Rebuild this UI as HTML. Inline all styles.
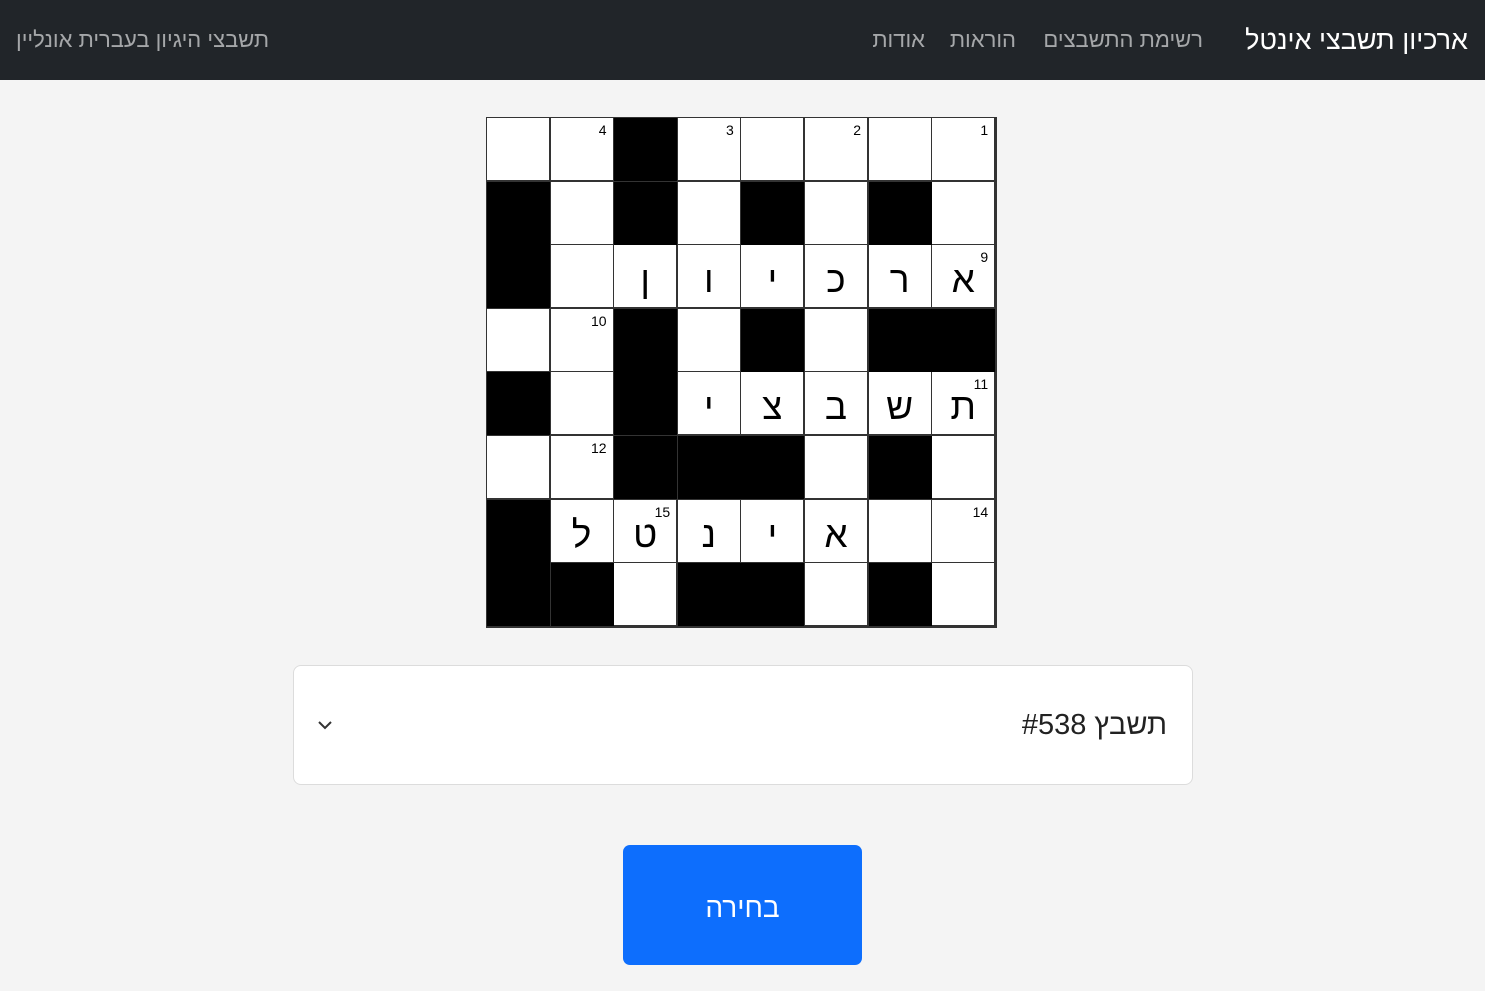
<!DOCTYPE html>
<html lang="he" dir="rtl"><head><meta charset="utf-8"><style>
body{margin:0;background:#f4f4f4;font-family:"Liberation Sans","Noto Sans CJK SC",sans-serif;width:1485px;height:991px;overflow:hidden;position:relative}
.nav{position:absolute;left:0;top:0;width:1485px;height:80px;background:#212529}
.nav span{position:absolute;top:27px;font-size:22px;color:#a5a7a9;white-space:nowrap}
.brand{right:17px;color:#fff!important;font-size:27px!important;top:25px!important}
.grid{position:absolute;left:486px;top:117px;width:511px;height:511px;background:#333}
.c{position:absolute;width:62px;height:62px;background:#fff;font-size:37px;text-align:center;line-height:70px;color:#000}
.b{background:#000}
.n{position:absolute;right:6px;top:4px;font-size:14px;line-height:16px}
.sel{position:absolute;left:293px;top:665px;width:898px;height:118px;border:1px solid #dcdcdc;border-radius:8px;background:#fff}
.sel .t{position:absolute;right:25px;top:43px;font-size:29px;color:#222}
.btn{position:absolute;left:623px;top:845px;width:239px;height:120px;background:#0d6efd;border-radius:7px;color:#fff;font-size:28px;text-align:center;line-height:126px}
</style></head><body>
<div class="nav">
<span class="brand">ארכיון תשבצי אינטל</span>
<span style="right:282px">רשימת התשבצים</span>
<span style="right:469px">הוראות</span>
<span style="right:560px">אודות</span>
<span style="left:16px">תשבצי היגיון בעברית אונליין</span>
</div>
<div class="grid" id="g"></div>
<div class="sel"><span class="t">תשבץ #538</span>
<svg style="position:absolute;left:23px;top:53px" width="16" height="12" viewBox="0 0 16 12"><path d="M2 3l6 6 6-6" fill="none" stroke="#333" stroke-width="2"/></svg></div>
<div class="btn">בחירה</div>
<script>
var rows=[
"W,W4,B,W3,W,W2,W,W1",
"B,W,B,W,B,W,B,W",
"B,W,ן,ו,י,כ,ר,א9",
"W,W10,B,W,B,W,B,B",
"B,W,B,י,צ,ב,ש,ת11",
"W,W12,B,B,B,W,B,W",
"B,ל,ט15,נ,י,א,W,W14",
"B,B,W,B,B,W,B,W"];
var g=document.getElementById('g'),h='';
rows.forEach(function(r,i){r.split(',').forEach(function(v,j){
var x=1+j*63.6,y=1+i*63.6;
if(v=='B'){h+='<div class="c b" style="left:'+x+'px;top:'+y+'px;width:63px;height:63px"></div>';return;}
var L=v[0]=='W'?'':v[0],num=v.replace(/^\D/,'');
h+='<div class="c" style="left:'+x+'px;top:'+y+'px">'+L+(num?'<span class="n">'+num+'</span>':'')+'</div>';
});});
g.innerHTML=h;
</script>
</body></html>
